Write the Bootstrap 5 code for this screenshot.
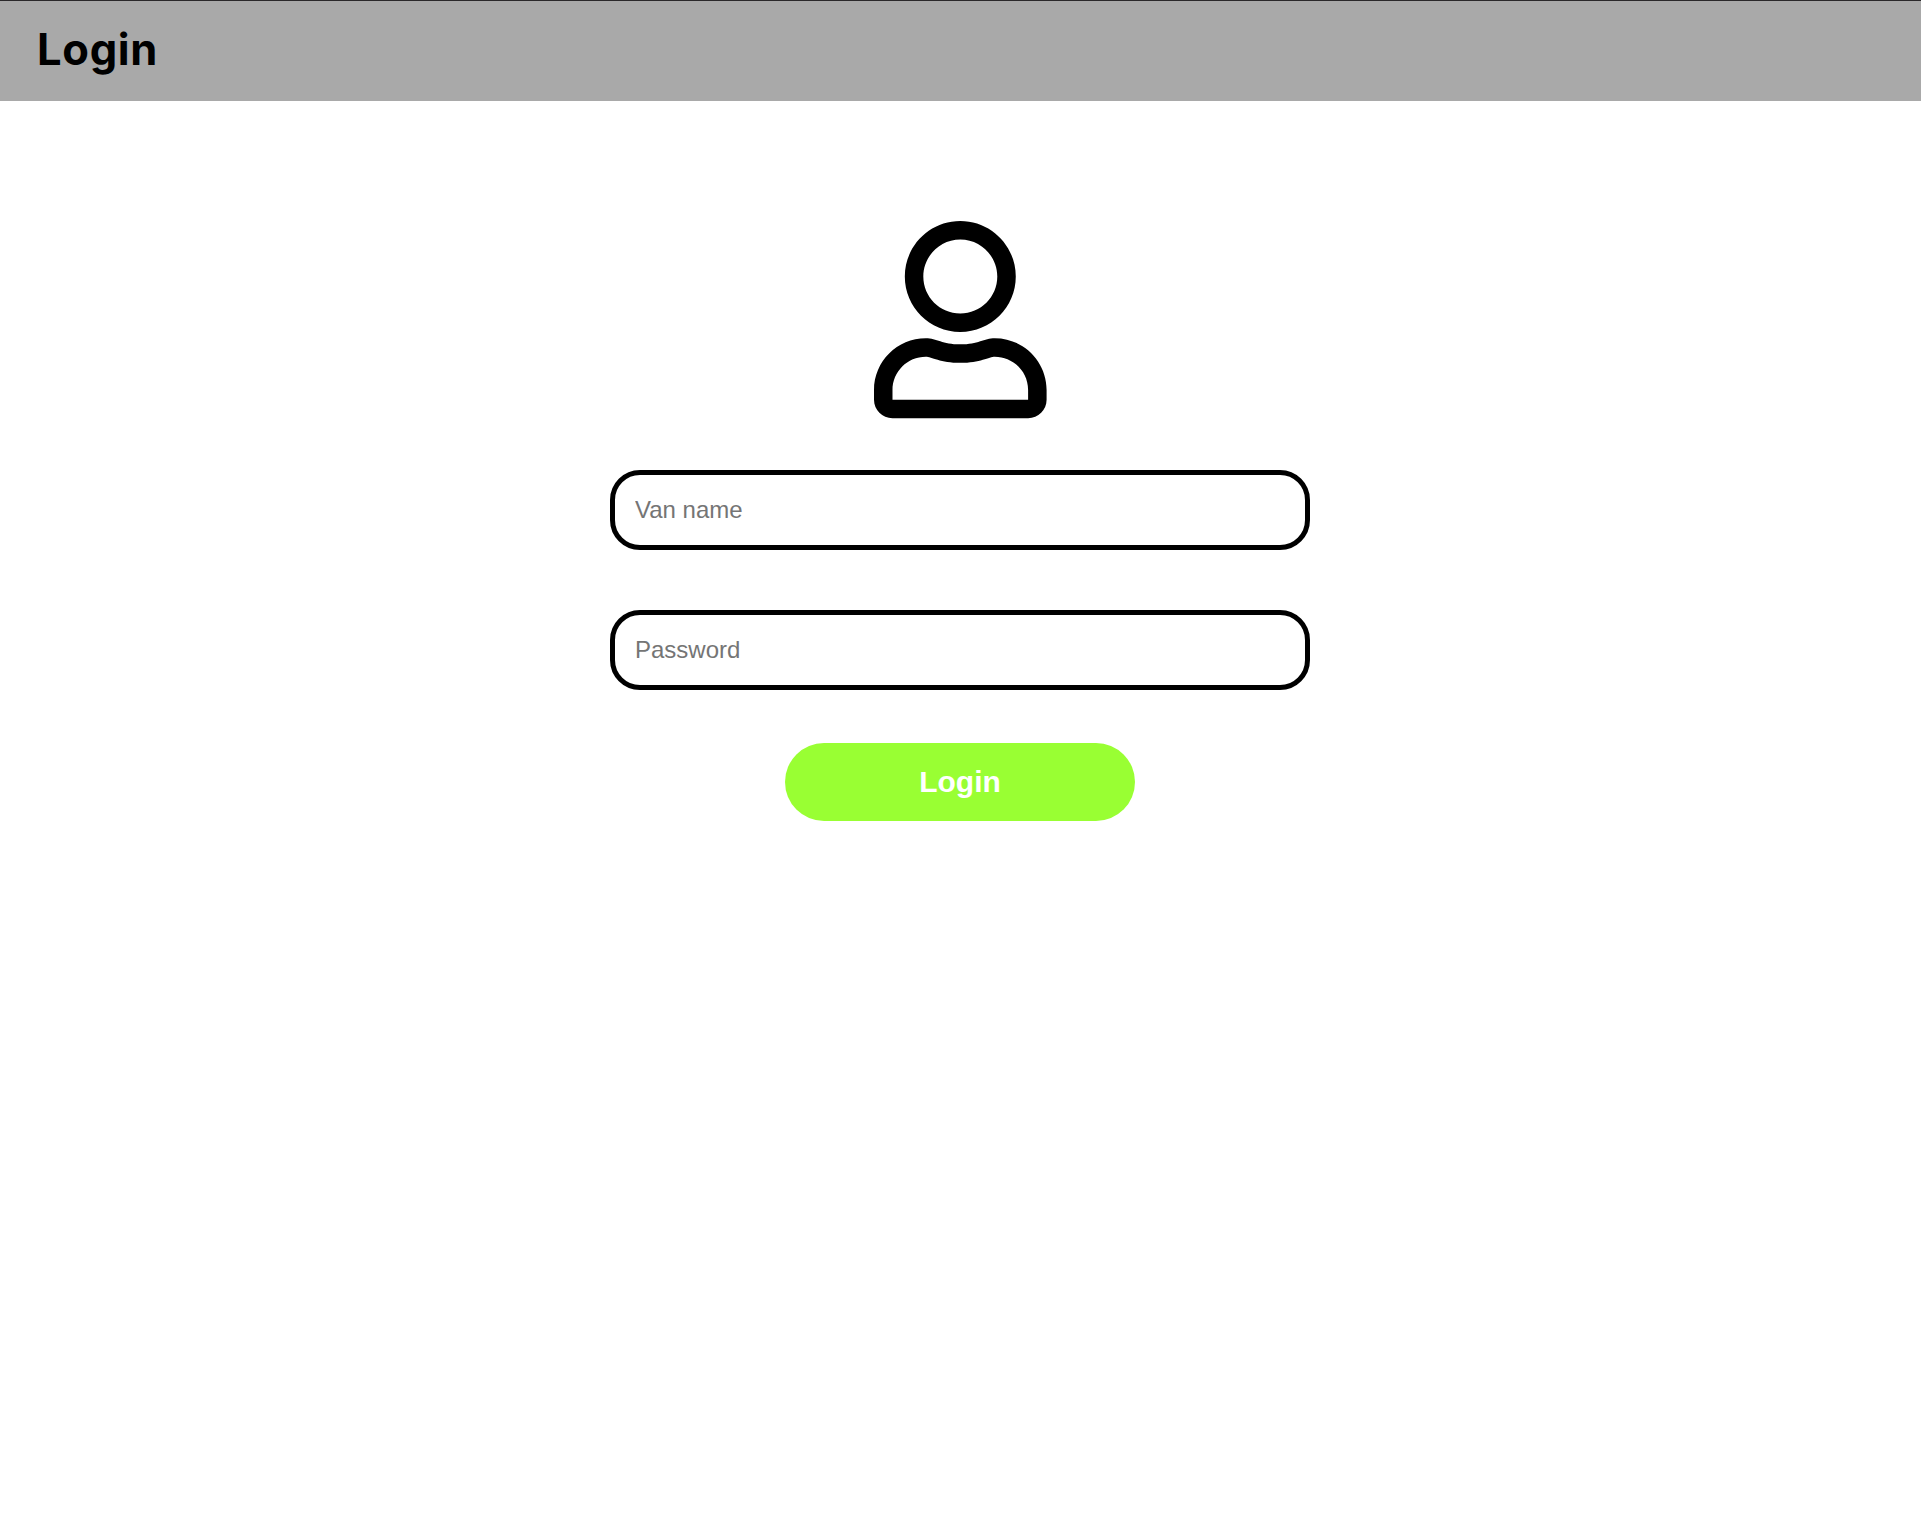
<!DOCTYPE html>
<html lang="en">
<head>
<meta charset="utf-8">
<meta name="viewport" content="width=device-width, initial-scale=1">
<title>Login</title>
<link href="https://cdn.jsdelivr.net/npm/bootstrap@5.3.0/dist/css/bootstrap.min.css" rel="stylesheet">
<style>
  body { background: #fff; font-family: "Liberation Sans", Arial, sans-serif; }
  .topbar { height: 101px; background: #a9a9a9; border-top: 1px solid #2a282a; padding: 0 0 2px 37px; }
  .topbar h1 { font: 700 43.5px/1 Inter, sans-serif; letter-spacing: .7px; color: #000; }
  .page-main { padding-right: 1px; }
  .login-form { width: 700px; padding-top: 120px; }
  .user-icon { width: 172.6px; height: 197.3px; margin-bottom: 51.7px; overflow: visible; }
  .login-form .form-control { height: 80px; border: 5px solid #000; border-radius: 30px; padding: 0 20px; font-size: 24px; color: #000; }
  .login-form .form-control::placeholder { color: #757575; }
  .van-name { margin-bottom: 60px; }
  .login-btn, .login-btn:hover { width: 350px; height: 78px; margin-top: 53px; background: #9f3; color: #fff; font-size: 30px; line-height: 1; }
</style>
</head>
<body>
<header class="topbar navbar d-flex align-items-center">
  <h1 class="mb-0">Login</h1>
</header>
<main class="page-main d-flex justify-content-center">
  <form class="login-form d-flex flex-column align-items-center">
    <svg class="user-icon flex-shrink-0" viewBox="0 0 448 512" aria-hidden="true"><path d="M313.6 304c-28.7 0-42.5 16-89.6 16-47.1 0-60.8-16-89.6-16C60.2 304 0 364.2 0 438.4V464c0 26.5 21.5 48 48 48h352c26.5 0 48-21.5 48-48v-25.6c0-74.2-60.2-134.4-134.4-134.4zM400 464H48v-25.6c0-47.6 38.8-86.4 86.4-86.4 14.6 0 38.3 16 89.6 16 51.7 0 74.9-16 89.6-16 47.6 0 86.4 38.8 86.4 86.4V464zM224 288c79.5 0 144-64.5 144-144S303.5 0 224 0 80 64.5 80 144s64.5 144 144 144zm0-240c52.9 0 96 43.1 96 96s-43.1 96-96 96-96-43.1-96-96 43.1-96 96-96z"/></svg>
    <input type="text" class="form-control van-name" placeholder="Van name" aria-label="Van name">
    <input type="password" class="form-control" placeholder="Password" aria-label="Password">
    <button type="button" class="btn login-btn rounded-pill border-0 fw-bold">Login</button>
  </form>
</main>
<script src="https://cdn.jsdelivr.net/npm/bootstrap@5.3.0/dist/js/bootstrap.bundle.min.js"></script>
</body>
</html>
